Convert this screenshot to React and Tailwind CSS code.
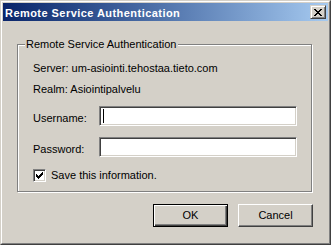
import React from "react";

const X_ROWS = [
  [0, 2, 6, 2],
  [1, 2, 5, 2],
  [2, 4],
  [3, 2],
  [2, 4],
  [1, 2, 5, 2],
  [0, 2, 6, 2],
];

function CloseGlyph() {
  const rects = [];
  X_ROWS.forEach((row, y) => {
    for (let i = 0; i < row.length; i += 2) {
      rects.push(<rect key={`${y}-${i}`} x={row[i]} y={y} width={row[i + 1]} height={1} />);
    }
  });
  return (
    <svg width="8" height="7" viewBox="0 0 8 7" shapeRendering="crispEdges" fill="#000">
      {rects}
    </svg>
  );
}

function CheckGlyph() {
  // classic 7x7 check mark
  const rows = [
    [6, 1],
    [5, 2],
    [0, 1, 4, 3],
    [0, 2, 3, 3],
    [0, 5],
    [1, 3],
    [2, 1],
  ];
  const rects = [];
  rows.forEach((row, y) => {
    for (let i = 0; i < row.length; i += 2) {
      rects.push(<rect key={`${y}-${i}`} x={row[i]} y={y} width={row[i + 1]} height={1} />);
    }
  });
  return (
    <svg width="7" height="7" viewBox="0 0 7 7" shapeRendering="crispEdges" fill="#000">
      {rects}
    </svg>
  );
}

const sunken =
  "border border-t-[#808080] border-l-[#808080] border-r-white border-b-white shadow-[inset_1px_1px_0_#404040,inset_-1px_-1px_0_#d4d0c8]";

function Field({ label, cursor }) {
  return (
    <div className="flex items-start h-[20px]">
      <span className="w-[66px] mt-[6px] leading-[13px]">{label}</span>
      <div className={`w-[198px] h-[20px] bg-white flex items-center pl-[2px] ${sunken}`}>
        {cursor && <span className="w-px h-[14px] bg-black ml-px" />}
      </div>
    </div>
  );
}

export default function App() {
  return (
    <div className="w-[331px] h-[245px] bg-[#d4d0c8] border border-t-[#d4d0c8] border-l-[#d4d0c8] border-r-[#404040] border-b-[#404040] text-[11px] leading-[13px] text-black font-['Liberation_Sans',Arial,sans-serif]">
      <div className="h-full border border-t-white border-l-white border-r-[#808080] border-b-[#808080] p-px flex flex-col">
        {/* title bar */}
        <div className="h-[18px] shrink-0 bg-linear-to-r from-[#0a246a] to-[#a6caf0] flex items-center justify-between pl-[2px] pr-[2px]">
          <span className="text-white font-bold tracking-[0.45px] leading-[18px] pt-[2px]">
            Remote Service Authentication
          </span>
          <div className="w-[16px] h-[14px] bg-[#d4d0c8] border border-t-[#d4d0c8] border-l-[#d4d0c8] border-r-[#404040] border-b-[#404040] shadow-[inset_1px_1px_0_#fff,inset_-1px_-1px_0_#808080] pl-[3px] pt-[3px]">
            <CloseGlyph />
          </div>
        </div>

        {/* group box */}
        <div className="relative ml-[14px] mt-[23px] w-[295px] h-[148px] border border-[#808080] shadow-[1px_1px_0_#fff,inset_1px_1px_0_#fff] pl-[15px] pt-[17px] flex flex-col">
          <span className="absolute left-[7px] -top-[7px] bg-[#d4d0c8] pl-px pr-[2px]">
            Remote Service Authentication
          </span>
          <div>Server: um-asiointi.tehostaa.tieto.com</div>
          <div className="mt-[8px]">Realm: Asiointipalvelu</div>
          <div className="mt-[10px]">
            <Field label="Username:" cursor />
          </div>
          <div className="mt-[11px]">
            <Field label="Password:" />
          </div>
          <div className="mt-[12px] flex items-center">
            <div className={`w-[13px] h-[13px] bg-white flex items-center justify-center ${sunken}`}>
              <CheckGlyph />
            </div>
            <span className="ml-[5px]">Save this information.</span>
          </div>
        </div>

        {/* buttons */}
        <div className="mt-[12px] pr-[15px] flex justify-end gap-[10px]">
          <button className="w-[75px] h-[23px] bg-[#d4d0c8] border border-black shadow-[inset_1px_1px_0_#fff,inset_-1px_-1px_0_#404040,inset_-2px_-2px_0_#808080] leading-[13px]">
            OK
          </button>
          <button className="w-[75px] h-[23px] bg-[#d4d0c8] border border-t-white border-l-white border-r-[#404040] border-b-[#404040] shadow-[inset_-1px_-1px_0_#808080] leading-[13px]">
            Cancel
          </button>
        </div>
      </div>
    </div>
  );
}
